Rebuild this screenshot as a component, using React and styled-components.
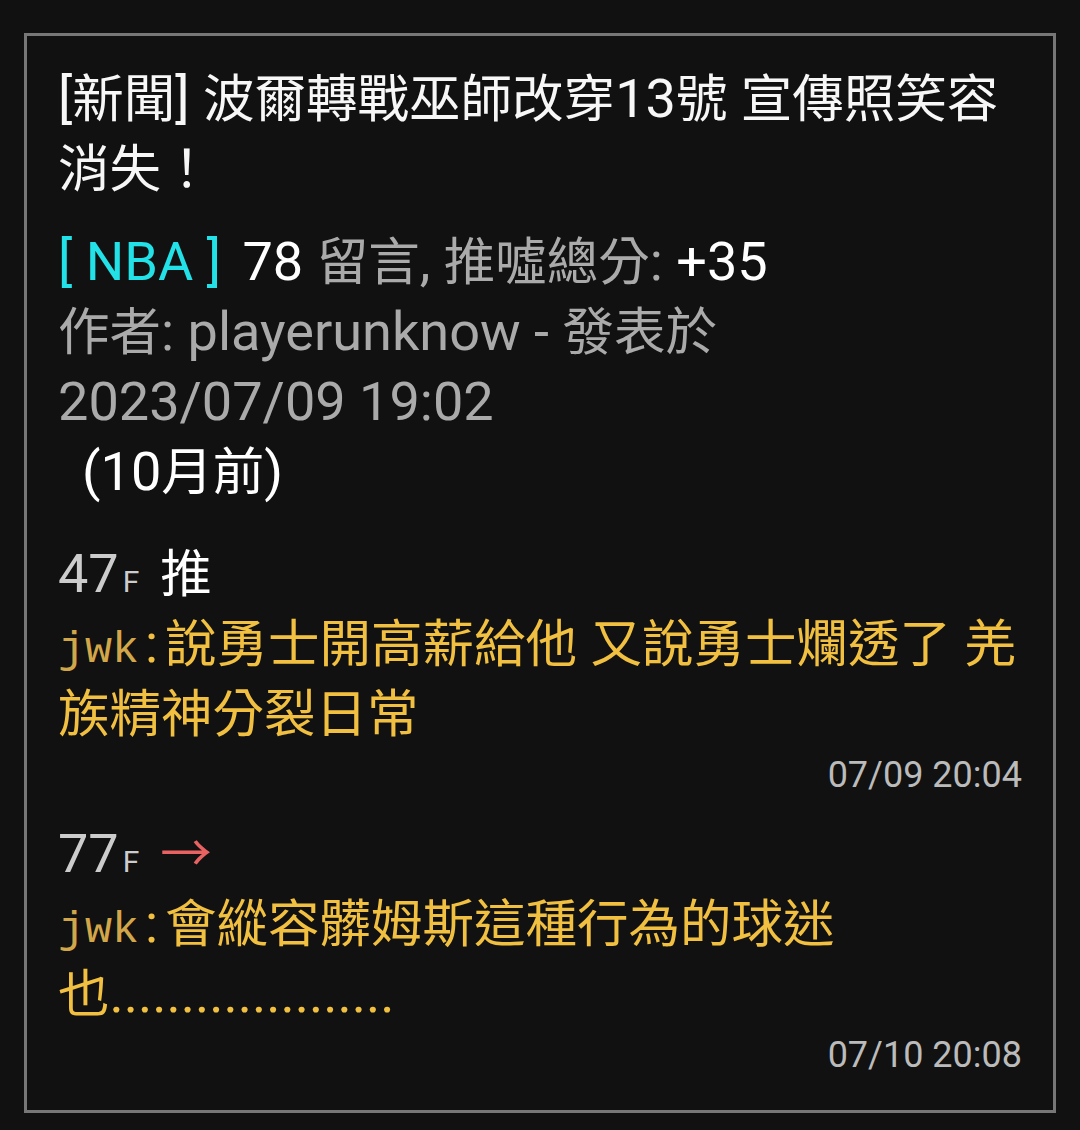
import React from "react";
import styled, { createGlobalStyle } from "styled-components";

const GlobalStyle = createGlobalStyle`
  html, body {
    margin: 0;
    padding: 0;
    background: #111111;
  }
  body {
    font-family: Roboto, "Noto Sans CJK TC", sans-serif;
  }
`;

const Card = styled.div`
  box-sizing: border-box;
  width: 1032px;
  margin: 33px 0 0 24px;
  border: 3px solid #777777;
  padding: 29px 31px 30px 31px;
  font-size: 51.5px;
  line-height: 70px;
  color: #ffffff;
`;

// Latin runs render a touch larger than the CJK ones on the device
const Lat = styled.span`
  font-family: Roboto, sans-serif;
  font-size: 1.05em;
  line-height: 1;
`;

const mix = (text) =>
  text
    .split(/([\x00-\x7F]+)/)
    .filter(Boolean)
    .map((part, i) =>
      /^[\x00-\x7F]+$/.test(part) ? <Lat key={i}>{part}</Lat> : part
    );

const Title = styled.div`
  color: #f7f7f7;
`;

const Meta = styled.div`
  margin-top: 23px;
  color: #aaaaaa;
`;

const Board = styled.span`
  color: #22e2e8;
`;

const Bright = styled.span`
  color: #ffffff;
  margin-left: ${(p) => p.gap || 0}px;
`;

const Ago = styled.div`
  color: #ffffff;
  padding-left: 24px;
`;

const Push = styled.div`
  margin-top: ${(p) => p.gap}px;
`;

const FloorRow = styled.div`
  white-space: nowrap;
`;

const Floor = styled.span`
  color: #cccccc;
  font-size: 54px;
  line-height: 1;
`;

const FloorMark = styled.span`
  color: #cccccc;
  font-size: 30px;
  line-height: 1;
  margin-left: 4px;
`;

const Tag = styled.span`
  margin-left: 21px;
  font-family: "Noto Sans CJK TC", sans-serif;
  line-height: 1;
  color: ${(p) => p.color};
`;

const Body = styled.div`
  color: #f2c040;
`;

const Author = styled.span`
  font-family: "Liberation Mono", "Courier New", monospace;
  font-size: 45px;
  line-height: 1;
  color: #d2a74a;
`;

const Colon = styled.span`
  font-size: 54px;
  line-height: 1;
  margin: 0 7px 0 6px;
`;

const Time = styled.div`
  text-align: right;
  font-size: 36px;
  line-height: 50px;
  color: #bbbbbb;
`;

const pushes = [
  {
    floor: 47,
    tag: "推",
    tagColor: "#ffffff",
    author: "jwk",
    text: "說勇士開高薪給他 又說勇士爛透了 羌族精神分裂日常",
    time: "07/09 20:04",
  },
  {
    floor: 77,
    tag: "→",
    tagColor: "#e86262",
    author: "jwk",
    text: "會縱容髒姆斯這種行為的球迷也....................",
    time: "07/10 20:08",
  },
];

export default function App() {
  return (
    <>
      <GlobalStyle />
      <Card>
        <Title>{mix("[新聞] 波爾轉戰巫師改穿13號 宣傳照笑容消失！")}</Title>
        <Meta>
          <div>
            <Board>{mix("[ NBA ]")}</Board>
            {mix(" ")}
            <Bright gap={8}>{mix("78")}</Bright>
            {mix(" 留言, 推噓總分: ")}
            <Bright>{mix("+35")}</Bright>
          </div>
          <div>{mix("作者: playerunknow - 發表於")}</div>
          <div>{mix("2023/07/09 19:02")}</div>
          <Ago>{mix("(10月前)")}</Ago>
        </Meta>
        {pushes.map((p, i) => (
          <Push key={p.floor} gap={i === 0 ? 32 : 20}>
            <FloorRow>
              <Floor>{p.floor}</Floor>
              <FloorMark>F</FloorMark>
              <Tag color={p.tagColor}>{p.tag}</Tag>
            </FloorRow>
            <Body>
              <Author>{p.author}</Author>
              <Colon>:</Colon>
              {mix(p.text)}
            </Body>
            <Time>{p.time}</Time>
          </Push>
        ))}
      </Card>
    </>
  );
}
